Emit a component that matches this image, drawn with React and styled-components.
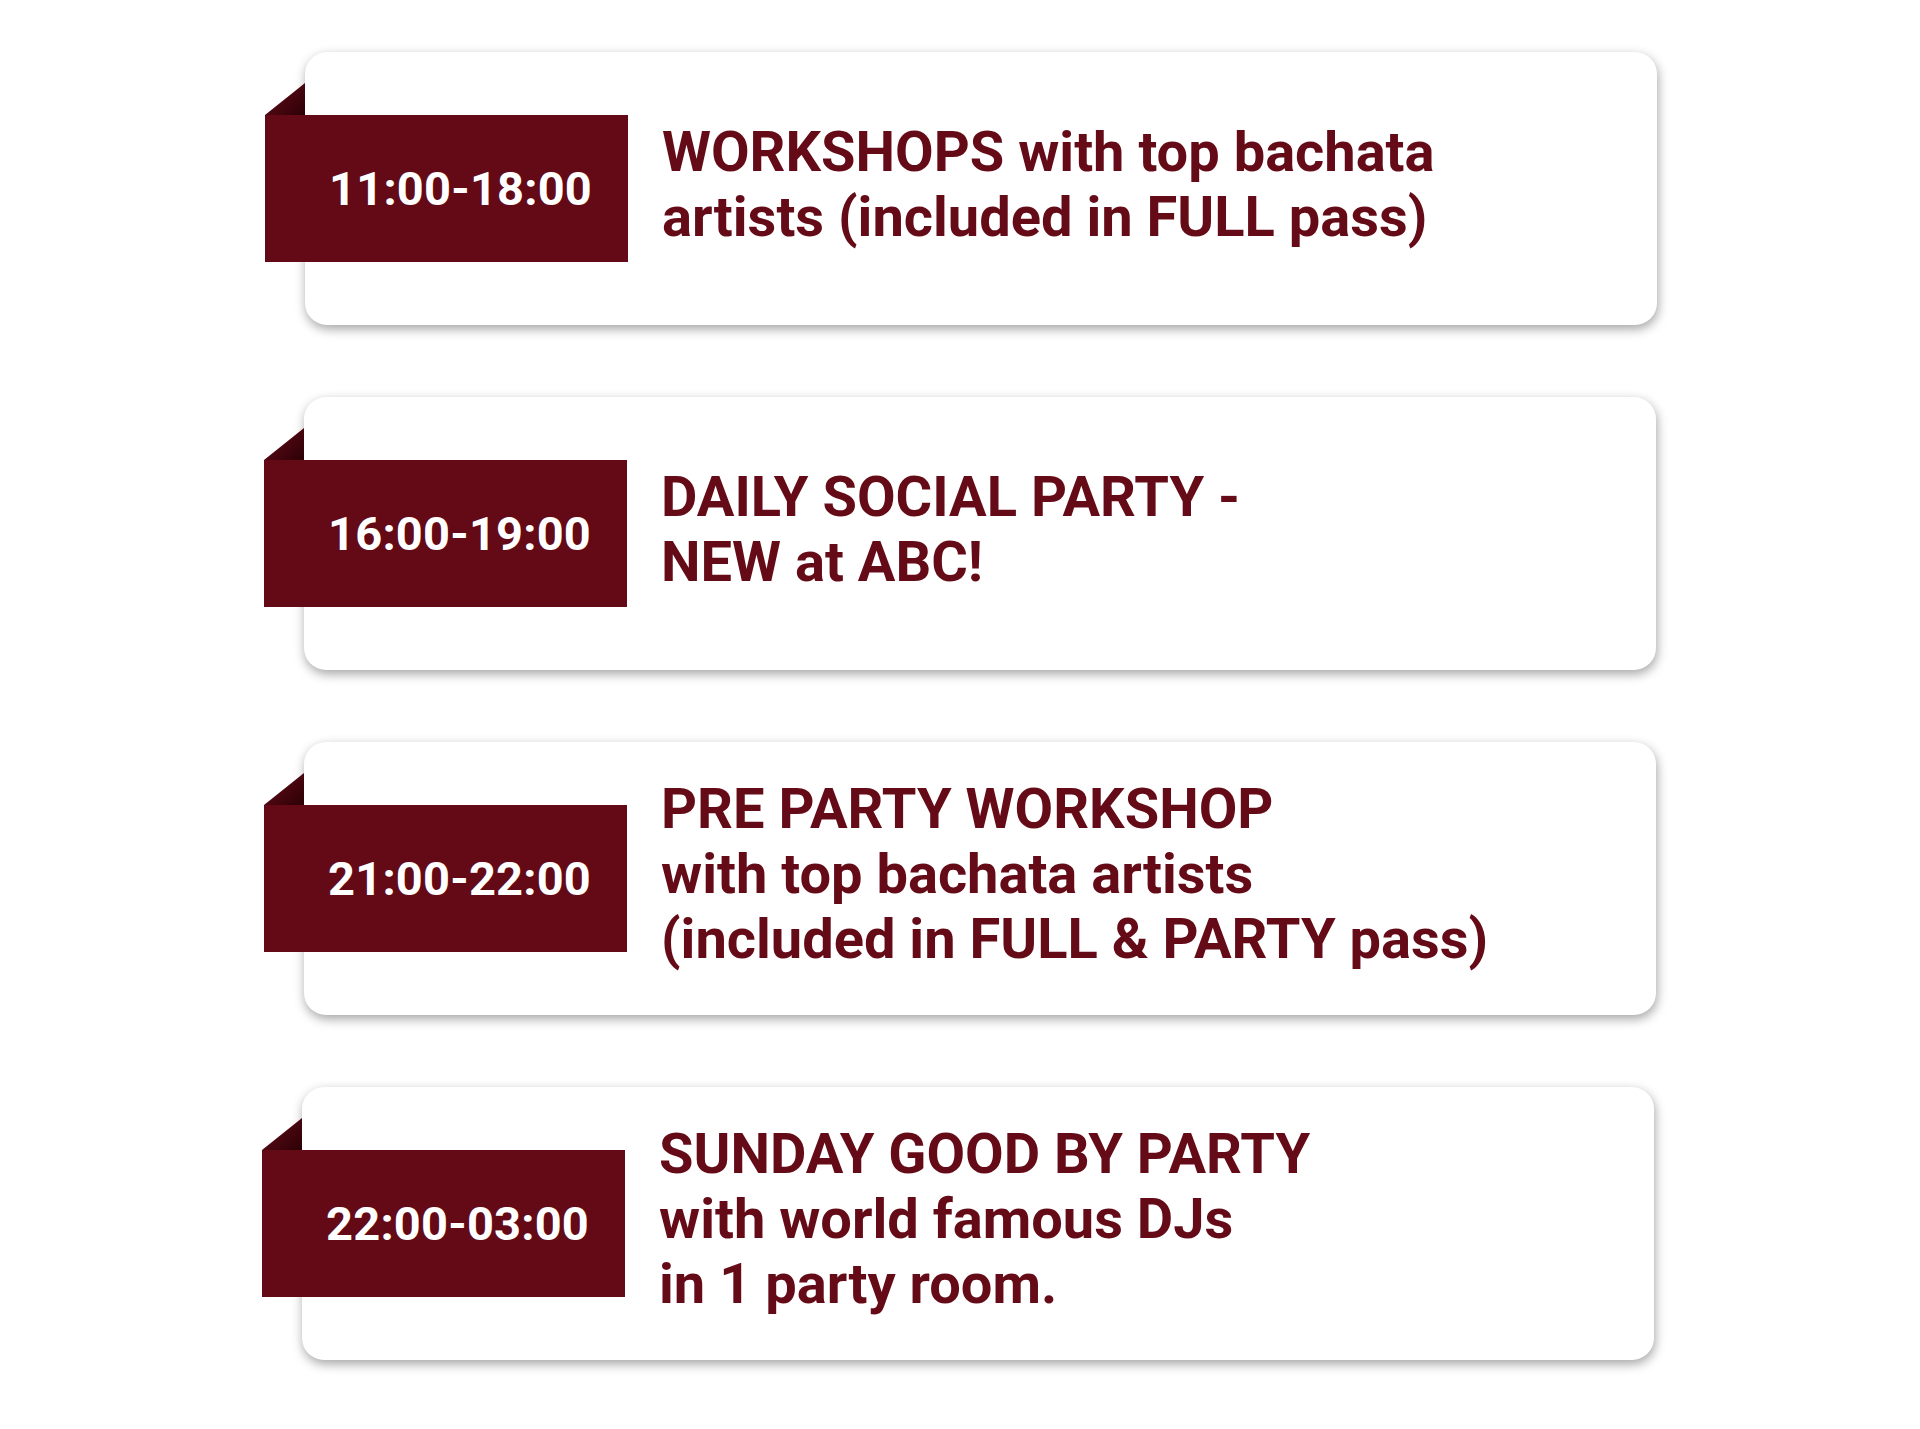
import React from "react";
import styled, { createGlobalStyle } from "styled-components";

const GlobalStyle = createGlobalStyle`
  html, body { margin: 0; padding: 0; background: #ffffff; }
  body { font-family: Roboto, "Liberation Sans", sans-serif; }
`;

const Page = styled.div`
  display: flex;
  flex-direction: column;
  gap: 72px;
  padding: 52px 0 60px 304px;
  width: 1352px;
`;

const Card = styled.div`
  display: flex;
  align-items: center;
  height: 273px;
  margin: 0 ${(p) => -p.$shift}px 0 ${(p) => p.$shift}px;
  background: #ffffff;
  border-radius: 22px;
  box-shadow: 1px 4px 11px rgba(0, 0, 0, 0.36);
`;

const Ribbon = styled.div`
  position: relative;
  flex-shrink: 0;
  display: flex;
  align-items: center;
  justify-content: flex-end;
  box-sizing: border-box;
  width: 363px;
  height: 147px;
  margin-left: -40px;
  padding-right: 36px;
  background: #640a16;
  color: #ffffff;
  font-family: Roboto, "Liberation Sans", sans-serif;
  font-weight: 700;
  font-size: 47px;
  letter-spacing: 0.2px;

  &::before {
    content: "";
    position: absolute;
    left: 0;
    top: -32px;
    width: 40px;
    height: 32px;
    background: linear-gradient(135deg, #5c0912 0%, #4a0610 50%, #2c0005 100%);
    clip-path: polygon(100% 0, 100% 100%, 0 100%);
  }
`;

const Text = styled.div`
  margin-left: 34px;
  padding-bottom: 8px;
  color: #640b17;
  font-family: Roboto, "Liberation Sans", sans-serif;
  font-weight: 700;
  font-size: 56px;
  line-height: 65px;
`;

const Line = styled.div`
  white-space: nowrap;
`;

const items = [
  { time: "11:00-18:00", shift: 1, lines: ["WORKSHOPS with top bachata", "artists (included in FULL pass)"] },
  { time: "16:00-19:00", shift: 0, lines: ["DAILY SOCIAL PARTY -", "NEW at ABC!"] },
  { time: "21:00-22:00", shift: 0, lines: ["PRE PARTY WORKSHOP", "with top bachata artists", "(included in FULL & PARTY pass)"] },
  { time: "22:00-03:00", shift: -2, lines: ["SUNDAY GOOD BY PARTY", "with world famous DJs", "in 1 party room."] },
];

export default function App() {
  return (
    <>
      <GlobalStyle />
      <Page>
        {items.map((it) => (
          <Card key={it.time} $shift={it.shift}>
            <Ribbon>{it.time}</Ribbon>
            <Text>
              {it.lines.map((l) => (
                <Line key={l}>{l}</Line>
              ))}
            </Text>
          </Card>
        ))}
      </Page>
    </>
  );
}
